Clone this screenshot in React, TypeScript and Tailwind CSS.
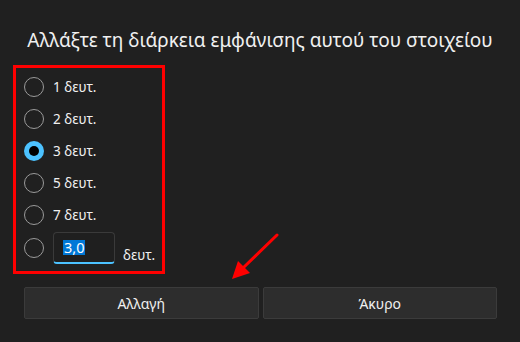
const font = { fontFamily: '"Noto Sans", "Open Sans", sans-serif' };

const options = [
  { label: "1 δευτ.", checked: false },
  { label: "2 δευτ.", checked: false },
  { label: "3 δευτ.", checked: true },
  { label: "5 δευτ.", checked: false },
  { label: "7 δευτ.", checked: false },
];

function Radio({ checked }: { checked: boolean }) {
  if (checked) {
    return (
      <span className="w-5 h-5 rounded-full bg-[#4cc2ff] flex items-center justify-center shrink-0">
        <span className="w-[10px] h-[10px] rounded-full bg-black" />
      </span>
    );
  }
  return <span className="w-5 h-5 rounded-full border border-[#9a9a9a] shrink-0" />;
}

export default function App() {
  return (
    <div className="relative w-[520px] h-[342px] bg-[#202020] text-[#f0f0f0] overflow-hidden" style={font}>
      <h1 className="pt-[26px] text-center text-[19px] leading-[28px]">
        Αλλάξτε τη διάρκεια εμφάνισης αυτού του στοιχείου
      </h1>

      <div className="mt-[11px] ml-[13px] w-[152px] h-[209px] border-[3px] border-[#ff0000] pt-[3px] pl-[8px]">
        {options.map(o => (
          <div key={o.label} className="h-8 flex items-center gap-[9px]">
            <Radio checked={o.checked} />
            <span className="text-[13.5px]">{o.label}</span>
          </div>
        ))}
        <div className="flex items-center mt-[1px] h-8">
          <Radio checked={false} />
          <div className="ml-[9px] w-[62px] h-8 rounded-[4px] border border-[#3a3a3a] border-b-2 border-b-[#4cc2ff] bg-[#1f1f1f] flex items-center pl-[9px]">
            <span className="bg-[#0078d7] text-white text-[14.5px] leading-[15px] px-[1px]">3,0</span>
          </div>
          <span className="ml-[8px] mt-[14px] text-[13.5px]">δευτ.</span>
        </div>
      </div>

      <div className="flex gap-1 pl-6 pr-[23px] mt-[13px]">
        <button className="flex-1 h-8 bg-[#2d2d2d] border border-[#3b3b3b] rounded-[2px] text-[14px] text-[#f0f0f0]">Αλλαγή</button>
        <button className="flex-1 h-8 bg-[#2d2d2d] border border-[#3b3b3b] rounded-[2px] text-[14px] text-[#f0f0f0]">Άκυρο</button>
      </div>

      <svg className="absolute left-0 top-0 pointer-events-none" width="520" height="342">
        <line x1="277" y1="235" x2="243" y2="268" stroke="#ff0000" strokeWidth="3" strokeLinecap="round" />
        <polygon points="232,279 238,261 250,273" fill="#ff0000" />
      </svg>
    </div>
  );
}
